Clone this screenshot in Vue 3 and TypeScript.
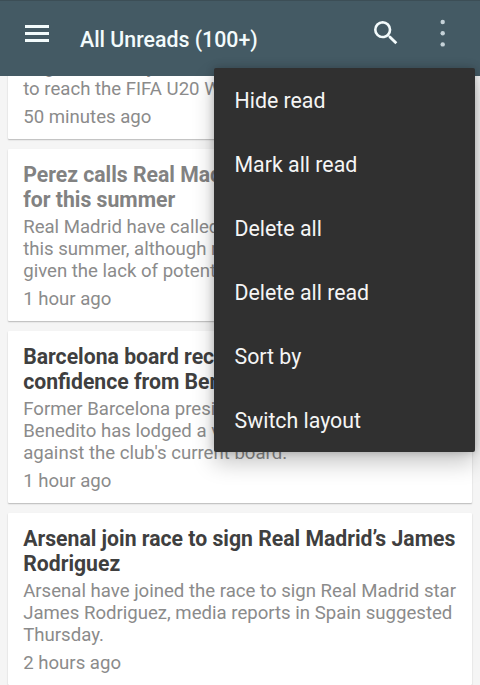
<template>
  <div class="screen">
    <header class="toolbar">
      <button class="icon-button nav" aria-label="Open navigation">
        <svg width="24" height="18" viewBox="0 0 24 18">
          <path d="M0 0h24v3H0zM0 7h24v3H0zM0 14h24v3H0z" fill="currentColor" />
        </svg>
      </button>
      <h1 class="toolbar-title">All Unreads (100+)</h1>
      <button class="icon-button search" aria-label="Search">
        <svg width="32" height="32" viewBox="0 0 24 24">
          <path
            d="M15.5 14h-.79l-.28-.27A6.47 6.47 0 0 0 16 9.5 6.5 6.5 0 1 0 9.5 16c1.61 0 3.09-.59 4.23-1.57l.27.28v.79l5 4.99L20.49 19l-4.99-5zm-6 0C7.01 14 5 11.99 5 9.5S7.01 5 9.5 5 14 7.01 14 9.5 11.99 14 9.5 14z"
            fill="currentColor"
          />
        </svg>
      </button>
      <button class="icon-button more" aria-label="More options">
        <svg width="6" height="28" viewBox="0 0 6 28">
          <circle cx="2.7" cy="3" r="2.2" fill="currentColor" />
          <circle cx="2.7" cy="14.2" r="2.2" fill="currentColor" />
          <circle cx="2.7" cy="25.4" r="2.2" fill="currentColor" />
        </svg>
      </button>
    </header>

    <main class="viewport">
      <div class="feed">
        <article
          v-for="article in articles"
          :key="article.id"
          class="card"
          :class="{ read: article.read }"
        >
          <h2 class="card-title">{{ article.title.join('\n') }}</h2>
          <p class="card-summary">{{ article.summary.join('\n') }}</p>
          <time class="card-time">{{ article.time }}</time>
        </article>
      </div>
    </main>

    <!-- Overflow menu -->
    <ul class="menu">
      <li v-for="item in menuItems" :key="item" class="menu-item">{{ item }}</li>
    </ul>
  </div>
</template>

<script setup lang="ts">
interface Article {
  id: number
  title: string[]
  summary: string[]
  time: string
  read?: boolean
}

const menuItems: string[] = [
  'Hide read',
  'Mark all read',
  'Delete all',
  'Delete all read',
  'Sort by',
  'Switch layout',
]

const articles: Article[] = [
  {
    id: 1,
    title: ['', ''],
    summary: ['', 'England Sunday', 'to reach the FIFA U20 W'],
    time: '50 minutes ago',
    read: true,
  },
  {
    id: 2,
    title: ['Perez calls Real Mad', 'for this summer'],
    summary: ['Real Madrid have called', 'this summer, although n', 'given the lack of potent'],
    time: '1 hour ago',
    read: true,
  },
  {
    id: 3,
    title: ['Barcelona board rec', 'confidence from Ben'],
    summary: ['Former Barcelona presi', 'Benedito has lodged a v', "against the club's current board."],
    time: '1 hour ago',
  },
  {
    id: 4,
    title: ['Arsenal join race to sign Real Madrid’s James', 'Rodriguez'],
    summary: [
      'Arsenal have joined the race to sign Real Madrid star',
      'James Rodriguez, media reports in Spain suggested',
      'Thursday.',
    ],
    time: '2 hours ago',
  },
]
</script>

<style>
body {
  margin: 0;
}
</style>

<style scoped>
.screen {
  position: relative;
  display: flex;
  flex-direction: column;
  width: 480px;
  height: 685px;
  overflow: hidden;
  background: #f5f5f5;
  font-family: Roboto, sans-serif;
}

.toolbar {
  display: flex;
  flex: none;
  box-sizing: border-box;
  height: 76px;
  padding: 0 34px 0 25px;
  border-top: 1px solid #3c4e56;
  background: #445a64;
  color: #f3fbfc;
}

.icon-button {
  display: flex;
  flex: none;
  align-items: flex-start;
  padding: 0;
  border: 0;
  background: none;
  color: inherit;
}

.nav {
  width: 55px;
  padding-top: 24px;
}

.toolbar-title {
  flex: 1;
  margin: 0;
  padding-top: 26px;
  font-size: 21.33px;
  font-weight: 500;
  line-height: 26px;
  white-space: nowrap;
}

.search {
  width: 70px;
  padding-top: 16px;
}

.more {
  width: 6px;
  padding-top: 18px;
  color: #c5d2d8;
}

.viewport {
  flex: 1;
  min-height: 0;
  overflow: hidden;
}

/* The list is scrolled part-way through its first card */
.feed {
  display: flex;
  flex-direction: column;
  gap: 10px;
  margin-top: -109px;
  padding: 0 8px;
}

.card {
  flex: none;
  box-sizing: border-box;
  height: 172px;
  padding: 13px 15.2px 0;
  border-radius: 1px;
  background: #fff;
  box-shadow: 0 1px 1.5px rgba(0, 0, 0, 0.25);
}

.card-title {
  height: 51px;
  margin: 0;
  color: #3f3f3f;
  font-size: 21.2px;
  font-weight: 700;
  line-height: 25.4px;
  white-space: pre;
}

.card-summary {
  height: 66px;
  margin: 3px 0 6px;
  color: #8b8b8b;
  font-size: 18.6px;
  line-height: 22px;
  white-space: pre;
}

.card-time {
  display: block;
  color: #8b8b8b;
  font-size: 18.6px;
  line-height: 22px;
}

.read .card-title {
  color: #828282;
}

.menu {
  position: absolute;
  top: 68px;
  right: 5px;
  box-sizing: border-box;
  width: 261.5px;
  height: 384px;
  margin: 0;
  padding: 0;
  border-radius: 2px;
  background: #303030;
  box-shadow: 0 11px 22px rgba(0, 0, 0, 0.22), 0 0 8px rgba(0, 0, 0, 0.22);
  list-style: none;
}

.menu-item {
  height: 64px;
  padding-left: 21px;
  color: #f5f5f5;
  font-size: 21.33px;
  line-height: 65px;
}
</style>
